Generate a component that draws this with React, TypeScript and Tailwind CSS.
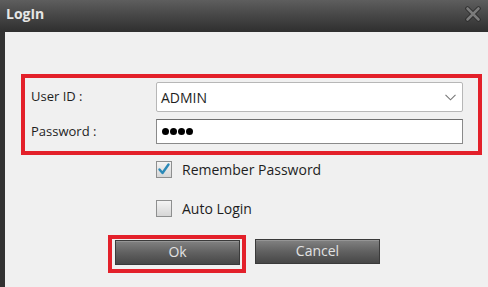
import React from "react";

const font = { fontFamily: '"Open Sans", "Noto Sans", sans-serif' };

function CheckBox({ checked }: { checked?: boolean }) {
    return (
        <div className="w-[16px] h-[17px] border border-[#8e8f8f] bg-gradient-to-b from-[#f4f4f4] to-[#d6d6d6] flex items-center justify-center">
            {checked && (
                <svg width="14" height="14" viewBox="0 0 14 14">
                    <path d="M2.5 7.5 L5.5 11 L11.5 2.5" fill="none" stroke="#2c8ab8" strokeWidth="2.4" strokeLinecap="round" strokeLinejoin="round" />
                </svg>
            )}
        </div>
    );
}

function DarkButton({ label }: { label: string }) {
    return (
        <button className="w-[125px] h-[25px] border border-[#3a3a3a] bg-gradient-to-b from-[#828282] via-[#616161] to-[#474747] text-[#e2e2e2] text-[14px] leading-none shadow-[inset_0_1px_0_#959595]">
            {label}
        </button>
    );
}

export default function App() {
    return (
        <div className="w-[488px] h-[287px] bg-[#323232] flex flex-col overflow-hidden" style={font}>
            {/* Title bar */}
            <div className="h-[32px] shrink-0 bg-gradient-to-b from-[#5e5e5e] to-[#2f2f2f] flex items-center justify-between pl-[6px] pr-[7px]">
                <span className="text-[14px] font-bold text-[#e6e6e6] -mt-[5px]">LogIn</span>
                <svg width="16" height="16" viewBox="0 0 16 16" className="-mt-[4px]">
                    <path d="M2.5 2.5 L13.5 13.5 M13.5 2.5 L2.5 13.5" stroke="#2a2a2a" strokeWidth="4.4" strokeLinecap="round" />
                    <path d="M2.5 2.5 L13.5 13.5 M13.5 2.5 L2.5 13.5" stroke="#7b7b7b" strokeWidth="2.6" strokeLinecap="round" />
                </svg>
            </div>

            {/* Body */}
            <div className="flex-1 ml-[5px] bg-[#f0f0f0] text-[#1e1e1e]">
                <div className="ml-[16px] mt-[42px] w-[461px] h-[81px] border-[4px] border-[#e3202a] pt-[4px] pl-[6px] pr-[15px] flex flex-col gap-[7px]">
                    <div className="flex items-center">
                        <span className="w-[125px] text-[13px]">User ID :</span>
                        <div className="flex-1 h-[30px] bg-white border border-[#b7b7b7] rounded-[2px] flex items-center justify-between pl-[4px] pr-[6px]">
                            <span className="text-[14px]">ADMIN</span>
                            <svg width="11" height="7" viewBox="0 0 11 7">
                                <path d="M0.5 0.8 L5.5 5.8 L10.5 0.8" fill="none" stroke="#777" strokeWidth="1.1" />
                            </svg>
                        </div>
                    </div>
                    <div className="flex items-center">
                        <span className="w-[125px] text-[13px]">Password :</span>
                        <div className="flex-1 h-[25px] bg-white border border-[#8a8a8a] border-t-[#6e6e6e] flex items-center gap-[1px] pl-[5px]">
                            <span className="w-[7px] h-[7px] rounded-full bg-black" />
                            <span className="w-[7px] h-[7px] rounded-full bg-black" />
                            <span className="w-[7px] h-[7px] rounded-full bg-black" />
                            <span className="w-[7px] h-[7px] rounded-full bg-black" />
                        </div>
                    </div>
                </div>

                <div className="ml-[151px] mt-[4px] flex flex-col gap-[19px]">
                    <label className="flex items-center gap-[10px] text-[14px] h-[20px]">
                        <CheckBox checked />
                        <span>Remember Password</span>
                    </label>
                    <label className="flex items-center gap-[10px] text-[14px] h-[20px]">
                        <CheckBox />
                        <span>Auto Login</span>
                    </label>
                </div>

                <div className="ml-[103px] mt-[17px] flex items-start">
                    <div className="border-[4px] border-[#e3202a] pt-[0px] pb-[4px] pl-[3px] pr-[2px]">
                        <DarkButton label="Ok" />
                    </div>
                    <div className="ml-[9px] mt-[3px]">
                        <DarkButton label="Cancel" />
                    </div>
                </div>
            </div>
        </div>
    );
}
